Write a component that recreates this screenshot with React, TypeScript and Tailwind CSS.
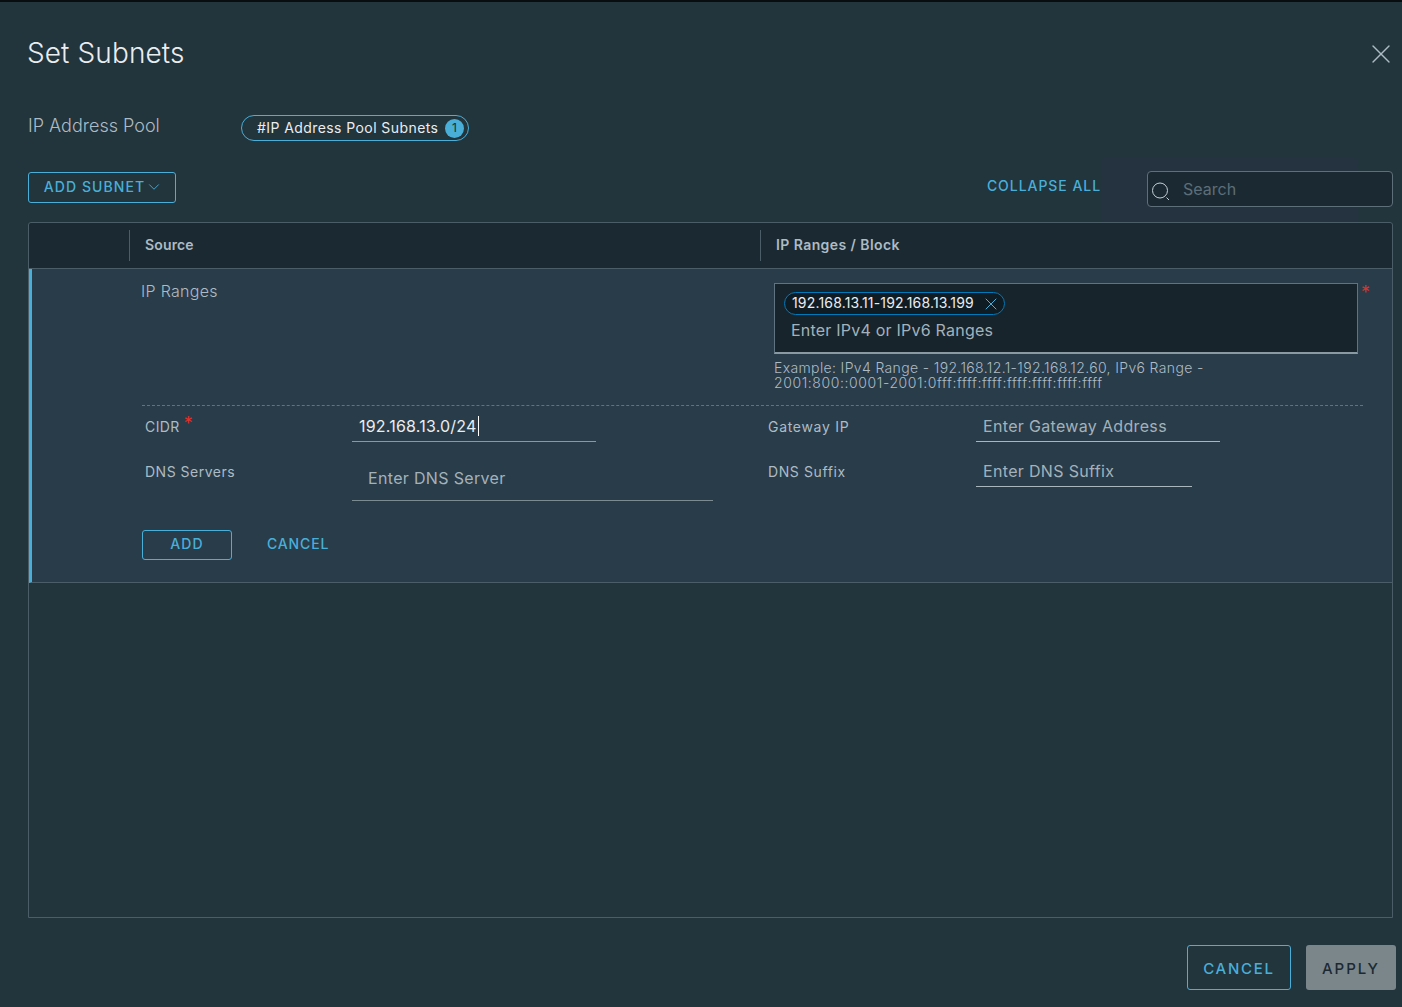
import { ChevronDown, X } from 'lucide-react';

function Field({ label, star, width, value, placeholder, active, tall, labelClass }: {
  label: string;
  star?: boolean;
  width: string;
  value?: string;
  placeholder?: string;
  active?: boolean;
  tall?: boolean;
  labelClass: string;
}) {
  return (
    <div className="flex items-start">
      <div className={`w-[208px] shrink-0 pt-[6px] text-[14px] leading-[20px] text-[#adbbc4] flex ${labelClass}`}>
        {label}
        {star && <span className="ml-[4px] -mt-[3px] text-[18px] text-[#d9342b]">*</span>}
      </div>
      <div className={`${width} border-b ${active ? 'border-[#49afd9]' : tall ? 'border-[#7c8a92]' : 'border-[#a9b6be]'} ${tall ? 'h-[45px] pl-[16px] pt-[10px]' : 'h-[31px] pl-[7px] pt-[3px]'} text-[16px] leading-[24px] tracking-[0.33px]`}>
        {value ? (
          <span className="text-[#eaedf0] border-r border-white pr-px tracking-[0.2px]">{value}</span>
        ) : (
          <span className="text-[#a3b2ba]">{placeholder}</span>
        )}
      </div>
    </div>
  );
}

export default function App() {
  return (
    <div
      className="relative w-[1402px] h-[1007px] overflow-hidden bg-[#22343c] border-t-2 border-[#0a0d10] pl-[28px] pr-[9px]"
      style={{ fontFamily: '"Inter", "Noto Sans", sans-serif' }}
    >
      <div className="absolute left-[1102px] top-[156px] w-[256px] h-[64px] bg-[#253240]"></div>

      <div className="relative flex items-center justify-between h-[100px] pt-[4px]">
        <h1 className="text-[28px] font-light tracking-[0.1px] text-[#eaedf0] leading-[32px] -mt-[2px] -ml-px">Set Subnets</h1>
        <X size={32} strokeWidth={1} className="text-[#adbbc4] -mr-[4px]" />
      </div>

      <div className="relative flex items-center h-[50px]">
        <span className="w-[213px] pb-[4px] text-[18px] font-light text-[#adbbc4]">IP Address Pool</span>
        <div className="flex items-center h-[26px] w-[228px] mt-[2px] rounded-full border border-[#49afd9] pl-[15px] pr-[4px] justify-between">
          <span className="pb-[2px] text-[14px] tracking-[0.42px] text-[#eaedf0] whitespace-nowrap">#IP Address Pool Subnets</span>
          <span className="flex items-center justify-center w-[19px] h-[19px] rounded-full bg-[#49afd9] text-[12px] text-[#1b2a32]">1</span>
        </div>
      </div>

      <div className="relative flex items-center h-[70px]">
        <button className="flex items-center justify-center w-[148px] h-[31px] pr-[2px] rounded-[3px] border border-[#49afd9] text-[14px] font-medium tracking-[1.1px] text-[#49afd9]">
          <span className="pb-[2px]">ADD SUBNET</span>
          <ChevronDown size={18} strokeWidth={1.2} className="ml-0 -mr-[5px]" />
        </button>
        <span className="ml-auto -mr-px text-[14px] font-medium tracking-[0.95px] text-[#49afd9] pb-[4px]">COLLAPSE ALL</span>
        <div className="flex items-center ml-[47px] w-[246px] h-[36px] rounded-[4px] border border-[#5f6f7a] bg-[#1b2a32] pl-[3px] mt-[4px]">
          <svg width="20" height="20" viewBox="0 0 20 20" fill="none" className="mt-[3px] text-[#c5d0d6]" stroke="currentColor" strokeWidth="1">
            <circle cx="9" cy="9.5" r="7.5" />
            <path d="M15.5 16.5l2.5 2.5" />
          </svg>
          <span className="ml-[12px] text-[16px] text-[#5d6e78]">Search</span>
        </div>
      </div>

      <div className="relative h-[696px] border border-[#4b5d66] rounded-t-[3px]">
        <div className="flex items-center h-[46px] bg-[#1b2a32] border-b border-[#4b5d66] rounded-t-[3px] text-[14px] leading-[20px] font-semibold text-[#adbbc4]">
          <div className="ml-[100px] w-[631px] h-[31px] border-l border-[#4b5d66] pl-[15px] pb-[2px] flex items-center tracking-[0.15px]">Source</div>
          <div className="h-[31px] border-l border-[#4b5d66] pl-[15px] pb-[2px] flex items-center tracking-[0.42px]">IP Ranges / Block</div>
        </div>

        <div className="h-[314px] bg-[#293c4a] border-l-[3px] border-[#49afd9] border-b border-b-[#4b5d66] pl-[109px] pr-[29px]">
          <div className="flex h-[137px] border-b border-dashed border-[#5f7380] ml-px">
            <span className="w-[633px] pt-[12px] -ml-px text-[16px] leading-[20px] font-light tracking-[0.3px] text-[#adbbc4]">IP Ranges</span>
            <div className="flex-1 pt-[14px]">
              <div className="relative w-[584px] h-[71px] bg-[#17242c] border border-[#5f7380] border-b-2 border-b-[#8a9aa3] pl-[9px] pt-[8px]">
                <div className="flex items-center w-[221px] h-[23px] rounded-full border border-[#0079b8] bg-[#101c24] pl-[7px] text-[14px] tracking-[0.17px] text-[#eaedf0]">
                  <span className="whitespace-nowrap pb-[2px]">192.168.13.11-192.168.13.199</span>
                  <X size={20} strokeWidth={1.2} className="ml-auto mr-[3px] text-[#49afd9]" />
                </div>
                <div className="pl-[7px] mt-[3px] text-[16px] leading-[24px] tracking-[0.22px] text-[#a3b2ba]">Enter IPv4 or IPv6 Ranges</div>
                <span className="absolute -right-[13px] -top-[5px] text-[18px] text-[#d9342b]">*</span>
              </div>
              <p className="mt-[6px] w-[470px] text-[14px] leading-[15px] font-light text-[#adbbc4]">
                <span className="block tracking-[0.36px]">Example: IPv4 Range - 192.168.12.1-192.168.12.60, IPv6 Range -</span>
                <span className="block tracking-[0.6px]">2001:800::0001-2001:0fff:ffff:ffff:ffff:ffff:ffff:ffff</span>
              </p>
            </div>
          </div>

          <div className="grid grid-cols-[624px_1fr] pl-[3px] pt-[5px] gap-y-[14px]">
            <Field label="CIDR" star labelClass="tracking-[0.4px] ml-px -mr-px" width="w-[244px]" value="192.168.13.0/24" active />
            <Field label="Gateway IP" labelClass="tracking-[0.7px]" width="w-[244px]" placeholder="Enter Gateway Address" />
            <Field label="DNS Servers" labelClass="tracking-[0.5px] ml-px -mr-px" width="w-[361px]" placeholder="Enter DNS Server" tall />
            <Field label="DNS Suffix" labelClass="tracking-[0.6px]" width="w-[216px]" placeholder="Enter DNS Suffix" />
          </div>

          <div className="flex items-center mt-[29px] ml-px">
            <button className="w-[90px] h-[30px] rounded-[3px] border border-[#49afd9] pb-[3px] text-[14px] font-medium tracking-[1.1px] text-[#49afd9]">ADD</button>
            <span className="ml-[35px] pb-[3px] text-[14px] font-medium tracking-[0.85px] text-[#49afd9]">CANCEL</span>
          </div>
        </div>
      </div>

      <div className="relative flex justify-end gap-[15px] mt-[27px] -mr-[3px]">
        <button className="w-[104px] h-[45px] rounded-[3px] border border-[#49afd9] pt-[3px] text-[15px] font-medium tracking-[1.75px] text-[#49afd9]">CANCEL</button>
        <button className="w-[90px] h-[45px] rounded-[3px] bg-[#7b868b] pt-[3px] text-[15px] font-medium tracking-[2px] text-[#1b2a32]">APPLY</button>
      </div>
    </div>
  );
}
